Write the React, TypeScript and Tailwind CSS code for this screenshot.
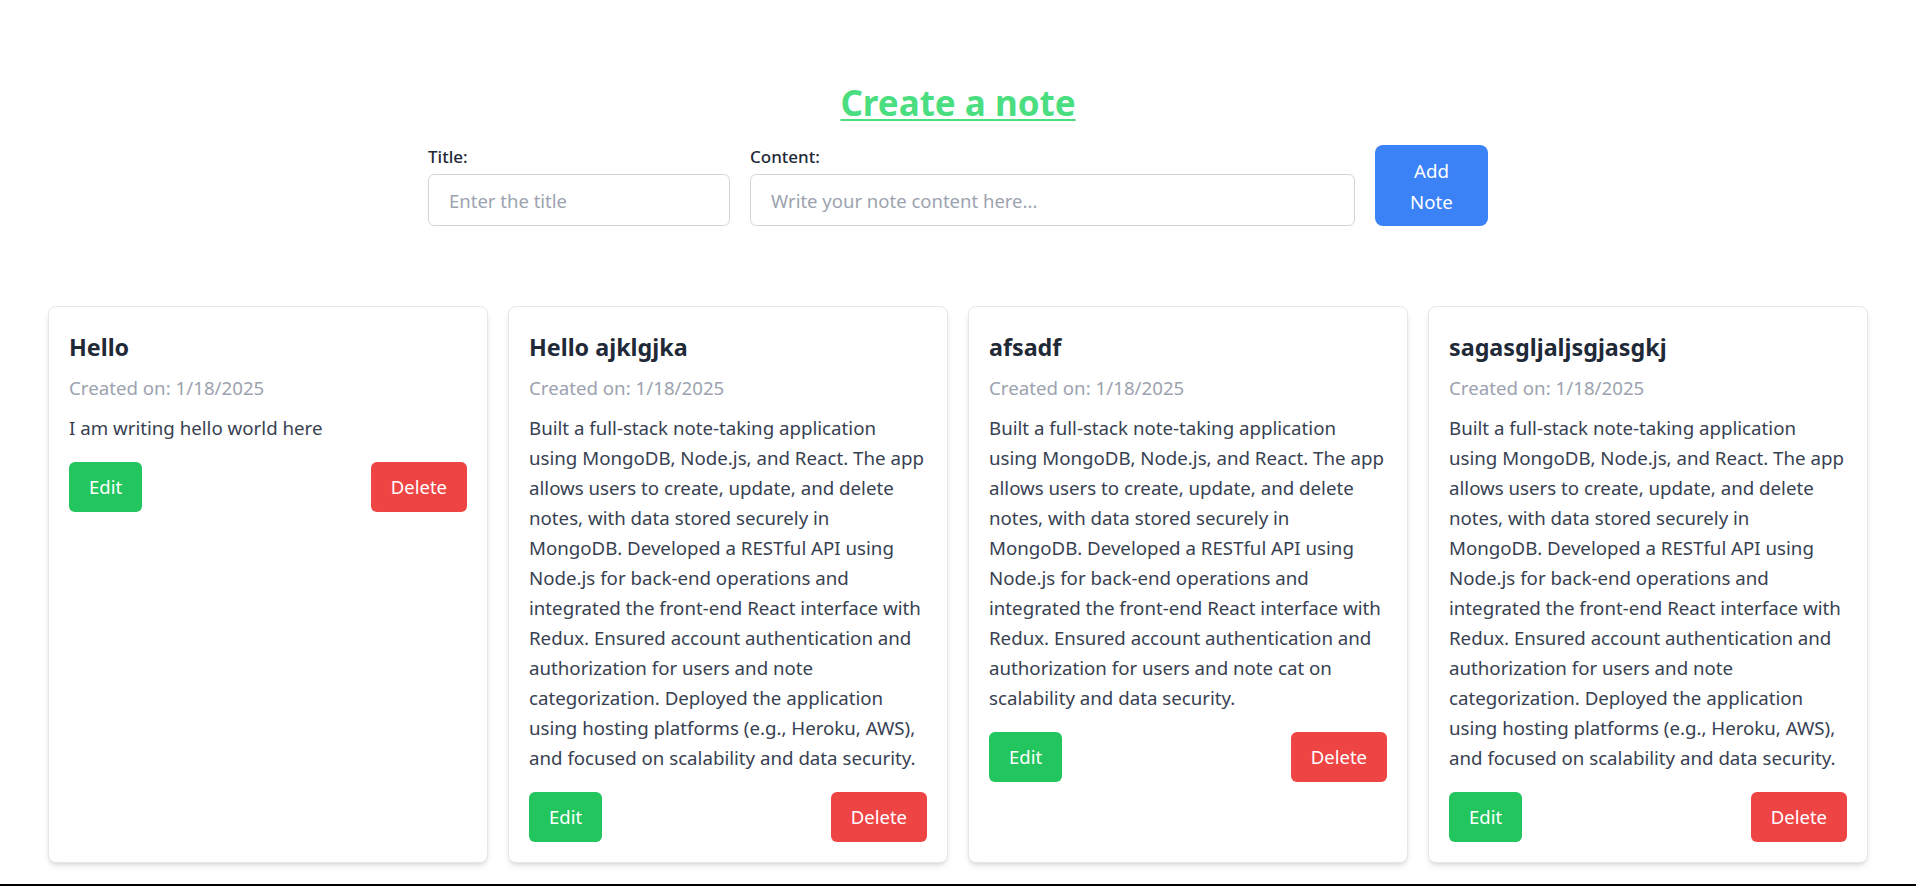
import React from "react";

type Note = { title: string; date: string; content: string };

const longText =
  "Built a full-stack note-taking application using MongoDB, Node.js, and React. The app allows users to create, update, and delete notes, with data stored securely in MongoDB. Developed a RESTful API using Node.js for back-end operations and integrated the front-end React interface with Redux. Ensured account authentication and authorization for users and note categorization. Deployed the application using hosting platforms (e.g., Heroku, AWS), and focused on scalability and data security.";

const notes: Note[] = [
  { title: "Hello", date: "1/18/2025", content: "I am writing hello world here" },
  { title: "Hello ajklgjka", date: "1/18/2025", content: longText },
  {
    title: "afsadf",
    date: "1/18/2025",
    content:
      "Built a full-stack note-taking application using MongoDB, Node.js, and React. The app allows users to create, update, and delete notes, with data stored securely in MongoDB. Developed a RESTful API using Node.js for back-end operations and integrated the front-end React interface with Redux. Ensured account authentication and authorization for users and note cat on scalability and data security.",
  },
  { title: "sagasgljaljsgjasgkj", date: "1/18/2025", content: longText },
];

function NoteCard({ note }: { note: Note }) {
  return (
    <div className="flex flex-col rounded-lg border border-[#e5e7eb] bg-white p-5 shadow-[0_4px_6px_-1px_rgba(0,0,0,0.1),0_2px_4px_-2px_rgba(0,0,0,0.1)]">
      <h2 className="text-[23.3px] font-bold leading-[40px] text-[#1f2937]">{note.title}</h2>
      <p className="mt-1.5 text-[18.7px] leading-[30px] text-[#9ca3af]">Created on: {note.date}</p>
      <p className="mt-2.5 text-[18.7px] leading-[30px] text-[#374151]">{note.content}</p>
      <div className="mt-[19px] flex items-center justify-between">
        <button className="flex h-[50px] items-center rounded-md bg-[#22c55e] px-5 text-[18.5px] text-white">
          Edit
        </button>
        <button className="flex h-[50px] items-center rounded-md bg-[#ef4444] px-5 text-[18.5px] text-white">
          Delete
        </button>
      </div>
    </div>
  );
}

export default function App() {
  return (
    <div className="h-[886px] overflow-hidden border-b-2 border-black bg-white pt-[79px] font-['Noto_Sans',sans-serif]">
      <h1 className="text-center text-[35px] font-bold leading-[48px] text-[#4ade80]">
        <span className="underline decoration-2 underline-offset-[3px]">Create a note</span>
      </h1>

      <form className="mx-auto mt-[18px] flex w-[1060px] items-end gap-5" onSubmit={(e) => e.preventDefault()}>
        <div className="flex w-[302px] flex-col">
          <label className="mb-[5px] text-[17px] font-medium leading-[24px] text-[#1f2937]">Title:</label>
          <input
            type="text"
            placeholder="Enter the title"
            className="h-[52px] rounded-md border border-[#d1d5db] px-5 text-[18.5px] text-[#374151] outline-none placeholder:text-[#9ca3af]"
          />
        </div>
        <div className="flex flex-1 flex-col">
          <label className="mb-[5px] text-[17px] font-medium leading-[24px] text-[#1f2937]">Content:</label>
          <input
            type="text"
            placeholder="Write your note content here..."
            className="h-[52px] rounded-md border border-[#d1d5db] px-5 text-[18.5px] text-[#374151] outline-none placeholder:text-[#9ca3af]"
          />
        </div>
        <button
          type="submit"
          className="h-[81px] w-[113px] rounded-lg bg-[#3b82f6] px-6 text-center text-[18.7px] leading-[31px] text-white"
        >
          Add Note
        </button>
      </form>

      <div className="mt-20 grid grid-cols-4 items-stretch gap-5 px-12">
        {notes.map((n, i) => (
          <NoteCard key={i} note={n} />
        ))}
      </div>
    </div>
  );
}
